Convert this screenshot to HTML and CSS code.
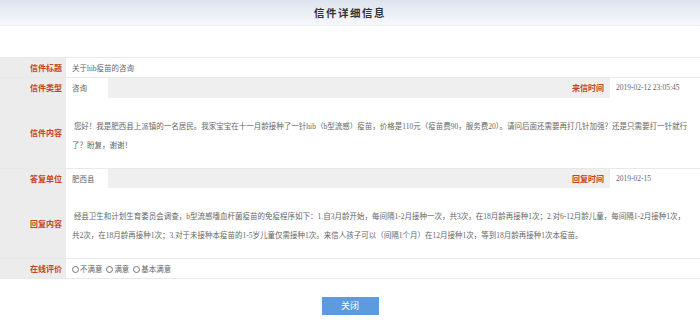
FILE: index.html
```html
<!doctype html>
<html>

<head>
    <title>信件详细信息</title>
    <link rel="stylesheet" href="styles.css">
</head>

<body>
    <div class="page-head">
        <h1>信件详细信息</h1>
    </div>

    <table class="detail">
        <colgroup>
            <col class="c-label">
            <col class="c-short">
            <col>
            <col class="c-time">
        </colgroup>
        <tr>
            <td class="label">信件标题</td>
            <td class="value" colspan="3">关于hib疫苗的咨询</td>
        </tr>
        <tr class="grey">
            <td class="label">信件类型</td>
            <td class="value">咨询</td>
            <td class="label label-right">来信时间</td>
            <td class="value">2019-02-12 23:05:45</td>
        </tr>
        <tr>
            <td class="label">信件内容</td>
            <td class="value long" colspan="3">&nbsp;您好！我是肥西县上派镇的一名居民。我家宝宝在十一月龄接种了一针hib（b型流感）疫苗，价格是110元（疫苗费90，服务费20）。请问后面还需要再打几针加强？还是只需要打一针就行了？盼复，谢谢！</td>
        </tr>
        <tr class="grey">
            <td class="label">答复单位</td>
            <td class="value">肥西县</td>
            <td class="label label-right">回复时间</td>
            <td class="value">2019-02-15</td>
        </tr>
        <tr>
            <td class="label">回复内容</td>
            <td class="value long" colspan="3">&nbsp;经县卫生和计划生育委员会调查，b型流感嗜血杆菌疫苗的免疫程序如下：1.自3月龄开始，每间隔1-2月接种一次，共3次，在18月龄再接种1次；2.对6-12月龄儿童，每间隔1-2月接种1次，共2次，在18月龄再接种1次；3.对于未接种本疫苗的1-5岁儿童仅需接种1次。来信人孩子可以（间隔1个月）在12月接种1次，等到18月龄再接种1次本疫苗。</td>
        </tr>
        <tr>
            <td class="label">在线评价</td>
            <td class="value" colspan="3">
                <label class="rate"><input type="radio" name="rate">不满意</label>
                <label class="rate"><input type="radio" name="rate">满意</label>
                <label class="rate"><input type="radio" name="rate">基本满意</label>
            </td>
        </tr>
    </table>

    <div class="actions">
        <button class="close-btn" type="button">关闭</button>
    </div>
</body>

</html>
```

FILE: styles.css
```css
body {
    margin: 0;
    font-family: "Liberation Serif", "Noto Sans CJK SC", serif;
    color: #666;
    background: #fff;
}

.page-head {
    height: 25px;
    background: linear-gradient(#dce4ee, #f6f8fb);
    border-bottom: 1px solid #edf0f4;
    text-align: center;
}

h1 {
    margin: 0;
    font-family: "Noto Sans CJK SC", sans-serif;
    font-size: 10.5px;
    line-height: 25px;
    letter-spacing: 1.5px;
    color: #333;
}

.detail {
    width: 100%;
    margin-top: 31px;
    border-collapse: collapse;
    table-layout: fixed;
    border-top: 1px solid #e8e8e8;
}

.c-label {
    width: 66px;
}

.c-short {
    width: 42px;
}

.c-time {
    width: 90px;
}

.detail td {
    height: 20px;
    padding: 0 6px;
    border-bottom: 1px solid #e8e8e8;
    font-size: 7.5px;
    vertical-align: middle;
    box-sizing: border-box;
}

.detail .label {
    padding: 0 4px 0 0;
    background: #ececec;
    color: #c8441a;
    font-family: "Noto Sans CJK SC", sans-serif;
    font-weight: bold;
    font-size: 8px;
    text-align: right;
}

.detail .label-right {
    padding-right: 6px;
    background: #efefef;
}

.detail .value {
    background: #fff;
}

.grey td {
    border-bottom: none;
}

.detail .long {
    height: 70px;
    padding: 19px 10px 13px 6px;
    line-height: 19px;
}

.rate {
    margin-right: 2px;
}

.rate input {
    width: 7px;
    height: 7px;
    margin: 0 1px 0 0;
    vertical-align: -1px;
}

.actions {
    padding-top: 16px;
    text-align: center;
}

.close-btn {
    width: 57px;
    height: 18px;
    padding: 0;
    border: none;
    background-color: #5d9cdc;
    color: #fff;
    font-family: "Noto Sans CJK SC", sans-serif;
    font-size: 9px;
    cursor: pointer;
}

.close-btn:hover {
    background-color: #4e8fd0;
}
```
